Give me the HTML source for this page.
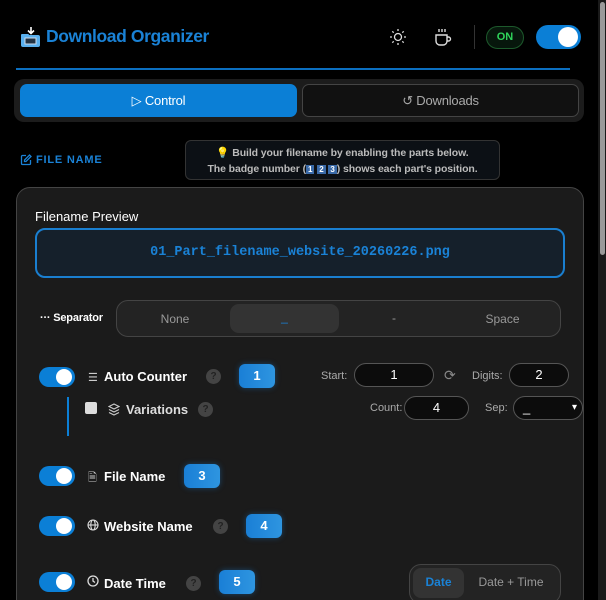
<!DOCTYPE html>
<html><head><meta charset="utf-8"><style>
*{box-sizing:border-box;margin:0;padding:0}
html{width:606px;height:600px;overflow:hidden;background:#000}
body{width:606px;height:600px;overflow:hidden;background:#000;font-family:"Liberation Sans",sans-serif;color:#fff;position:relative}
.a{position:absolute}
.tog{position:absolute;width:36px;height:20px;border-radius:10px;background:#0b7fd6}
.tog:after{content:"";position:absolute;right:3px;top:2px;width:16px;height:16px;border-radius:50%;background:#fff}
.badge{position:absolute;height:24px;border-radius:6px;background:linear-gradient(90deg,#1a7fd6,#2e95e0);color:#fff;font-weight:bold;font-size:13px;text-align:center;line-height:24px;width:36px;box-shadow:0 0 6px rgba(30,130,220,.4)}
.q{position:absolute;width:15px;height:15px;border-radius:50%;background:#444;color:#222;font-size:10px;font-weight:bold;text-align:center;line-height:15px}
.lbl{position:absolute;font-size:13px;font-weight:bold;color:#fff}
.inp{position:absolute;height:24px;border:1px solid #555;border-radius:12px;background:#0c0c0c;color:#fff;font-size:13px;text-align:center;line-height:22px}
.sm{position:absolute;font-size:11px;color:#aaa}
</style></head><body>
<svg class="a" style="left:20px;top:26px" width="22" height="22" viewBox="0 0 22 22"><path d="M11 1v6M8 4.5l3 3 3-3" stroke="#fff" stroke-width="1.6" fill="none"/><rect x="1" y="9" width="19" height="12" rx="2" fill="#5ab0ee"/><rect x="1" y="8" width="8" height="3" rx="1" fill="#5ab0ee"/><rect x="5" y="12" width="11" height="6" fill="#234" stroke="#cde" stroke-width="1"/></svg>
<div class="a" style="left:46px;top:26px;font-size:17.5px;font-weight:bold;color:#1a82d6;letter-spacing:-0.4px">Download Organizer</div>
<svg class="a" style="left:389px;top:28px" width="18" height="18" viewBox="0 0 18 18" stroke="#ddd" stroke-width="1.3" fill="none"><circle cx="9" cy="9" r="3.5"/><path d="M9 1v2M9 15v2M1 9h2M15 9h2M3.3 3.3l1.4 1.4M13.3 13.3l1.4 1.4M3.3 14.7l1.4-1.4M13.3 4.7l1.4-1.4"/></svg>
<svg class="a" style="left:433px;top:27px" width="20" height="20" viewBox="0 0 20 20" stroke="#ddd" stroke-width="1.4" fill="none"><path d="M3 8h11v6a4 4 0 0 1-4 4H7a4 4 0 0 1-4-4z"/><path d="M14 10h1.5a2 2 0 0 1 0 4H14"/><path d="M6 2v3M9 2v3M12 2v3"/></svg>
<div class="a" style="left:474px;top:25px;width:1px;height:24px;background:#333"></div>
<div class="a" style="left:486px;top:26px;width:38px;height:23px;border-radius:12px;border:1px solid #1d5a2c;background:#07170c;color:#2fd45a;font-size:11px;font-weight:bold;text-align:center;line-height:21px">ON</div>
<div class="a" style="left:536px;top:25px;width:45px;height:24px;border-radius:12px;background:#0b7fd6"><div class="a" style="right:3px;top:2px;width:20px;height:20px;border-radius:50%;background:#fff"></div></div>
<div class="a" style="left:16px;top:68px;width:554px;height:2px;background:#0b6fc0"></div>
<div class="a" style="left:14px;top:79px;width:570px;height:43px;border-radius:10px;background:#1c1c1c"></div>
<div class="a" style="left:20px;top:84px;width:277px;height:33px;border-radius:7px;background:#0b7fd6;font-size:13px;text-align:center;line-height:33px;letter-spacing:-0.2px">▷ Control</div>
<div class="a" style="left:302px;top:84px;width:277px;height:33px;border-radius:7px;background:#111;border:1px solid #444;color:#aaa;font-size:13px;text-align:center;line-height:31px;letter-spacing:-0.2px">↺ Downloads</div>
<svg class="a" style="left:20px;top:154px" width="12" height="12" viewBox="0 0 12 12" stroke="#1a82d6" stroke-width="1.3" fill="none"><path d="M6 1.5H2.5a1 1 0 0 0-1 1v7a1 1 0 0 0 1 1h7a1 1 0 0 0 1-1V6"/><path d="M9.5 1l1.5 1.5L6 7.5H4.5V6z"/></svg>
<div class="a" style="left:36px;top:154px;font-size:11px;font-weight:bold;color:#1a82d6;letter-spacing:0.8px">FILE NAME</div>
<div class="a" style="left:185px;top:140px;width:315px;height:40px;border-radius:6px;border:1px solid #333;background:#0c1015;color:#bbb;font-size:10.5px;text-align:center;line-height:16px;padding-top:4px;font-weight:bold;letter-spacing:-0.1px">💡 Build your filename by enabling the parts below.<br>The badge number (<span style="background:#3a6aa8;color:#fff;font-size:8px;padding:0 2px">1</span> <span style="background:#3a6aa8;color:#fff;font-size:8px;padding:0 2px">2</span> <span style="background:#3a6aa8;color:#fff;font-size:8px;padding:0 2px">3</span>) shows each part's position.</div>
<div class="a" style="left:16px;top:187px;width:568px;height:430px;border-radius:14px;background:#1b1b1b;border:1px solid #444"></div>
<div class="a" style="left:35px;top:209px;font-size:13px">Filename Preview</div>
<div class="a" style="left:35px;top:228px;width:530px;height:50px;border-radius:10px;border:2px solid #1a7fd0;background:#15202b;color:#1a82d6;font-family:'Liberation Mono',monospace;font-weight:bold;font-size:13.5px;text-align:center;line-height:46px">01_Part_filename_website_20260226.png</div>
<div class="a" style="left:40px;top:312px;font-size:11px;font-weight:bold;letter-spacing:-0.2px">··· Separator</div>
<div class="a" style="left:116px;top:300px;width:445px;height:37px;border-radius:12px;border:1px solid #444;background:#232323"></div>
<div class="a" style="left:230px;top:304px;width:109px;height:29px;border-radius:9px;background:#333"></div>
<div class="a" style="left:116px;top:312px;width:118px;text-align:center;font-size:12px;color:#999">None</div>
<div class="a" style="left:230px;top:310px;width:109px;text-align:center;font-size:12px;color:#1a82d6">_</div>
<div class="a" style="left:339px;top:311px;width:110px;text-align:center;font-size:12px;color:#999">-</div>
<div class="a" style="left:445px;top:312px;width:115px;text-align:center;font-size:12px;color:#999">Space</div>
<div class="tog" style="left:39px;top:367px"></div>
<div class="a" style="left:88px;top:371px;font-size:11px;color:#ccc">☰</div>
<div class="lbl" style="left:104px;top:369px">Auto Counter</div>
<div class="q" style="left:206px;top:369px">?</div>
<div class="badge" style="left:239px;top:364px">1</div>
<div class="sm" style="left:321px;top:370px">Start:</div>
<div class="inp" style="left:354px;top:363px;width:80px">1</div>
<div class="a" style="left:444px;top:367px;font-size:14px;color:#888">⟳</div>
<div class="sm" style="left:472px;top:370px">Digits:</div>
<div class="inp" style="left:509px;top:363px;width:60px">2</div>
<div class="a" style="left:67px;top:397px;width:2px;height:39px;background:#0b7fd6"></div>
<div class="a" style="left:85px;top:402px;width:12px;height:12px;border-radius:2px;background:#ddd"></div>
<svg class="a" style="left:108px;top:403px" width="12" height="13" viewBox="0 0 12 13" stroke="#ccc" stroke-width="1.1" fill="none"><path d="M6 1L11 3.5 6 6 1 3.5z M1 6.5L6 9l5-2.5 M1 9.5L6 12l5-2.5"/></svg>
<div class="lbl" style="left:126px;top:402px;color:#ddd">Variations</div>
<div class="q" style="left:198px;top:402px">?</div>
<div class="sm" style="left:370px;top:402px">Count:</div>
<div class="inp" style="left:404px;top:396px;width:65px">4</div>
<div class="sm" style="left:485px;top:402px">Sep:</div>
<div class="inp" style="left:513px;top:396px;width:70px;text-align:left;padding-left:9px">_<span style="position:absolute;right:5px;top:0;font-size:10px">▾</span></div>
<div class="tog" style="left:39px;top:466px"></div>
<div class="a" style="left:88px;top:469px;font-size:11px;color:#ccc">🗎</div>
<div class="lbl" style="left:104px;top:469px">File Name</div>
<div class="badge" style="left:184px;top:464px">3</div>
<div class="tog" style="left:39px;top:516px"></div>
<svg class="a" style="left:87px;top:519px" width="12" height="12" viewBox="0 0 12 12" stroke="#ddd" stroke-width="1.1" fill="none"><circle cx="6" cy="6" r="5"/><ellipse cx="6" cy="6" rx="2.2" ry="5"/><path d="M1 6h10"/></svg>
<div class="lbl" style="left:104px;top:519px">Website Name</div>
<div class="q" style="left:213px;top:519px">?</div>
<div class="badge" style="left:246px;top:514px">4</div>
<div class="tog" style="left:39px;top:572px"></div>
<svg class="a" style="left:87px;top:575px" width="12" height="12" viewBox="0 0 12 12" stroke="#ddd" stroke-width="1.3" fill="none"><circle cx="6" cy="6" r="5"/><path d="M6 3v3l2 1.5"/></svg>
<div class="lbl" style="left:104px;top:576px">Date Time</div>
<div class="q" style="left:186px;top:576px">?</div>
<div class="badge" style="left:219px;top:570px">5</div>
<div class="a" style="left:409px;top:564px;width:152px;height:40px;border-radius:12px;border:1px solid #444;background:#232323"></div>
<div class="a" style="left:413px;top:568px;width:51px;height:30px;border-radius:8px;background:#333;color:#1a82d6;font-size:12px;text-align:center;line-height:28px;font-weight:bold">Date</div>
<div class="a" style="left:468px;top:575px;width:86px;text-align:center;font-size:12px;color:#999">Date + Time</div>
<div class="a" style="left:598px;top:0;width:8px;height:600px;background:#1a1a1a"></div>
<div class="a" style="left:600px;top:2px;width:5px;height:253px;border-radius:3px;background:#9a9a9a"></div>
</body></html>
